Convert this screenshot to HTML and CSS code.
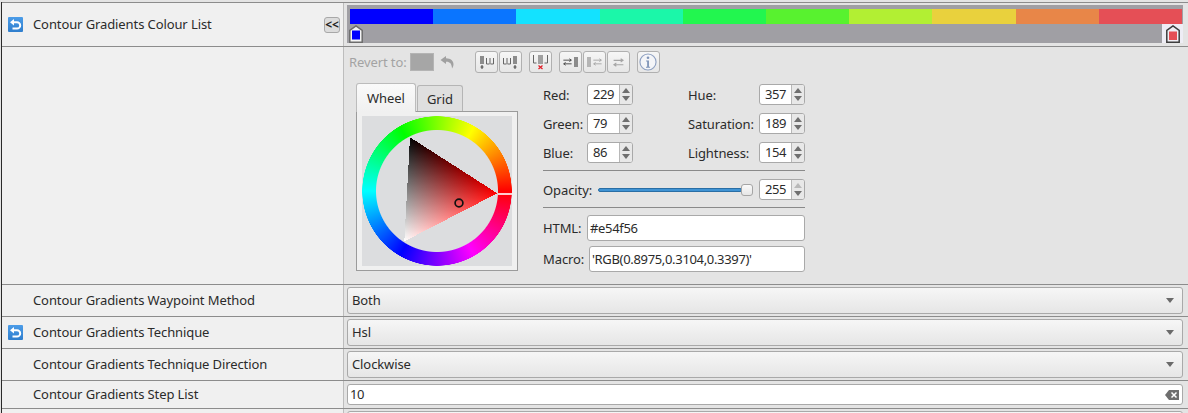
FILE: index.html
```html
<!DOCTYPE html>
<html lang="en">
<head>
<meta charset="utf-8">
<title>Contour Gradients</title>
<link rel="stylesheet" href="styles.css">
</head>
<body>
<svg class="defs" width="0" height="0" aria-hidden="true">
  <defs>
    <symbol id="reset" viewBox="0 0 15 15">
      <path d="M4 5.200H9a3.200 3.200 0 0 1 0 6.400H4.500" fill="none" stroke="#fff" stroke-width="2"/>
      <path d="M6 2v6.400L2 5.200z" fill="#fff"/>
    </symbol>
    <symbol id="arrows" viewBox="0 0 12 10">
      <path d="M1.500 3h8.500M8 1.500 10.200 3 8 4.500M10.500 7H2M4 5.500 1.800 7 4 8.500" fill="none" stroke="currentColor" stroke-width="1"/>
    </symbol>
  </defs>
</svg>
<main class="panel">
  <section class="row">
    <div class="label">
      <svg class="reset" width="15" height="15"><use href="#reset"/></svg>
      <span class="label-text">Contour Gradients Colour List</span>
      <button class="collapse">&lt;&lt;</button>
    </div>
    <div class="value value-bar">
      <div class="colour-list">
        <div class="stops">
          <i class="c0"></i><i class="c1"></i><i class="c2"></i><i class="c3"></i><i class="c4"></i><i class="c5"></i><i class="c6"></i><i class="c7"></i><i class="c8"></i><i class="c9"></i>
        </div>
        <div class="handles">
          <svg class="handle" width="14" height="18" viewBox="0 0 14 18"><path d="M.8 17.200V5.500L7 .9l6.200 4.600v11.700z" fill="#f4f4f4" stroke="#6c6c6c" stroke-width="1.500"/><rect x="3" y="5.500" width="8" height="9" fill="#0000ff"/></svg>
          <span class="handle-selected"><svg width="14" height="18" viewBox="0 0 14 18"><path d="M.8 17.200V5.500L7 .9l6.200 4.600v11.700z" fill="#f0eff5" stroke="#3d3d3d" stroke-width="1.500"/><rect x="3" y="6.500" width="8" height="8.500" fill="#e54f56"/></svg></span>
        </div>
      </div>
    </div>
  </section>

  <section class="row">
    <div class="label"></div>
    <div class="value value-editor">
      <div class="toolbar">
        <span class="revert-label">Revert to:</span>
        <span class="revert-swatch"></span>
        <svg class="undo" width="15" height="13" viewBox="0 0 15 13"><path d="M6 0 .5 4 6 8V5.800c3.500-.3 5.800 1.700 6 6.700 3.300-4.800 1-10-6-10.200z" fill="#a0a0a0"/></svg>
        <div class="tool-group">
          <button class="tool"><svg width="17" height="15" viewBox="0 0 17 15"><rect x="2" y="1" width="4" height="8" fill="#8c8c8c"/><path d="M4 10v4M2.500 12h3" stroke="#444"/><path d="M8.500 3v6h3M15.500 3v6h-3M12 3v6" fill="none" stroke="#666"/></svg></button>
          <button class="tool"><svg width="17" height="15" viewBox="0 0 17 15"><path d="M1.500 3v6h3M8.500 3v6h-3M5 3v6" fill="none" stroke="#666"/><rect x="11" y="1" width="4" height="8" fill="#8c8c8c"/><path d="M13 10v4M11.500 12h3" stroke="#444"/></svg></button>
        </div>
        <button class="tool tool-solo"><svg width="17" height="16" viewBox="0 0 17 16"><path d="M1.500 1v8h3M15.500 1v8h-3" fill="none" stroke="#666"/><rect x="6" y="1" width="5" height="9" fill="#a0a0a0"/><path d="M6.500 11.500l4 3.500M10.500 11.500l-4 3.500" stroke="#e0202a" stroke-width="1.300"/></svg></button>
        <div class="tool-group">
          <button class="tool"><svg width="17" height="12" viewBox="0 0 17 12"><svg x="0" y="1" width="11" height="10" class="dark"><use href="#arrows"/></svg><rect x="12" y="1" width="4" height="10" fill="#8c8c8c"/></svg></button>
          <button class="tool"><svg width="17" height="12" viewBox="0 0 17 12"><rect x="1" y="1" width="4" height="10" fill="#b5b5b5"/><svg x="6" y="1" width="11" height="10" class="faded"><use href="#arrows"/></svg></svg></button>
          <button class="tool"><svg width="13" height="11" viewBox="0 0 13 11" class="faded"><use href="#arrows"/></svg></button>
        </div>
        <button class="tool tool-info"><svg width="18" height="18" viewBox="0 0 19 19"><circle cx="9.500" cy="9.500" r="8.500" fill="#f4f5f8" stroke="#8fa1c2" stroke-width="1.200"/><circle cx="9.500" cy="5" r="1.400" fill="#7f94b8"/><path d="M7.500 8h3v6.500h1.200v1H7.400v-1h1.200V9H7.500z" fill="#7f94b8"/></svg></button>
      </div>

      <div class="picker">
        <div class="tabs">
          <div class="tab-bar">
            <span class="tab tab-active">Wheel</span>
            <span class="tab">Grid</span>
          </div>
          <div class="tab-pane">
            <div class="wheel">
              <svg width="150" height="150" viewBox="0 0 150 150">
                <defs>
                  <linearGradient id="hue" gradientUnits="userSpaceOnUse" x1="135.300" y1="77.300" x2="45.200" y2="72.360">
                    <stop offset="0" stop-color="#ff0000"/><stop offset="1" stop-color="#ff0000" stop-opacity="0"/>
                  </linearGradient>
                  <linearGradient id="lum" gradientUnits="userSpaceOnUse" x1="42.300" y1="125.300" x2="91.200" y2="49">
                    <stop offset="0" stop-color="#ffffff"/><stop offset="1" stop-color="#ffffff" stop-opacity="0"/>
                  </linearGradient>
                </defs>
                <g class="tri" shape-rendering="crispEdges">
                  <polygon points="48,21.300 135.300,77.300 42.300,125.300" fill="#000"/>
                  <polygon class="add" points="48,21.300 135.300,77.300 42.300,125.300" fill="url(#hue)"/>
                  <polygon class="add" points="48,21.300 135.300,77.300 42.300,125.300" fill="url(#lum)"/>
                </g>
                <path d="M136 78 150 78" stroke="#fff" stroke-width="1.600"/>
                <circle cx="97" cy="87" r="3.900" fill="none" stroke="#111" stroke-width="1.700"/>
              </svg>
            </div>
          </div>
        </div>

        <div class="form">
          <div class="spin-cols">
            <div class="spin-col col-rgb">
              <span>Red:</span><div class="spin"><span class="spin-val">229</span><span class="spin-btns"><i class="up"></i><i class="down"></i></span></div>
              <span>Green:</span><div class="spin"><span class="spin-val">79</span><span class="spin-btns"><i class="up"></i><i class="down"></i></span></div>
              <span>Blue:</span><div class="spin"><span class="spin-val">86</span><span class="spin-btns"><i class="up"></i><i class="down"></i></span></div>
            </div>
            <div class="spin-col col-hsl">
              <span>Hue:</span><div class="spin"><span class="spin-val">357</span><span class="spin-btns"><i class="up"></i><i class="down"></i></span></div>
              <span>Saturation:</span><div class="spin"><span class="spin-val">189</span><span class="spin-btns"><i class="up"></i><i class="down"></i></span></div>
              <span>Lightness:</span><div class="spin"><span class="spin-val">154</span><span class="spin-btns"><i class="up"></i><i class="down"></i></span></div>
            </div>
          </div>
          <hr class="rule">
          <div class="opacity">
            <span>Opacity:</span>
            <div class="slider"><span class="track"></span><span class="thumb"></span></div>
            <div class="spin"><span class="spin-val">255</span><span class="spin-btns"><i class="up off"></i><i class="down"></i></span></div>
          </div>
          <hr class="rule">
          <div class="field field-html"><span class="field-label">HTML:</span><span class="text-input">#e54f56</span></div>
          <div class="field field-macro"><span class="field-label">Macro:</span><span class="text-input">'RGB(0.8975,0.3104,0.3397)'</span></div>
        </div>
      </div>
    </div>
  </section>

  <section class="row">
    <div class="label"><span class="label-text">Contour Gradients Waypoint Method</span></div>
    <div class="value value-control"><div class="select"><span>Both</span><i class="caret"></i></div></div>
  </section>

  <section class="row">
    <div class="label">
      <svg class="reset" width="15" height="15"><use href="#reset"/></svg>
      <span class="label-text">Contour Gradients Technique</span>
    </div>
    <div class="value value-control"><div class="select"><span>Hsl</span><i class="caret"></i></div></div>
  </section>

  <section class="row">
    <div class="label"><span class="label-text">Contour Gradients Technique Direction</span></div>
    <div class="value value-control"><div class="select"><span>Clockwise</span><i class="caret"></i></div></div>
  </section>

  <section class="row">
    <div class="label"><span class="label-text">Contour Gradients Step List</span></div>
    <div class="value value-input">
      <div class="line-edit">
        <span>10</span>
        <svg width="14" height="10" viewBox="0 0 14 10"><path d="M4 0h10v10H4L0 5z" fill="#6e6e6e"/><path d="M6.500 2.500l5 5M11.500 2.500l-5 5" stroke="#fff" stroke-width="1.500"/></svg>
      </div>
    </div>
  </section>

  <section class="row">
    <div class="label"></div>
    <div class="value value-control"><div class="select"></div></div>
  </section>
</main>
</body>
</html>
```
FILE: styles.css
```css
* { box-sizing: border-box; }
html { height: 413px; overflow: hidden; }
body {
  margin: 0;
  height: 413px;
  overflow: hidden;
  background: #e4e4e4;
  color: #2b2b2b;
  font: 13px/18px "Noto Sans", "Open Sans", sans-serif;
  letter-spacing: -0.1px;
}
.defs { display: block; height: 0; }
.panel {
  height: 411px;
  overflow: hidden;
  margin: 2px 0 0 1px;
  border-left: 1px solid #2a2a2a;
}
.row {
  display: grid;
  grid-template-columns: 342px 1fr;
  border-top: 1px solid #8c8c8c;
}
.label {
  display: flex;
  align-items: center;
  padding-left: 31px;
  background: #f0f0f0;
  border-right: 1px solid #bdbdbd;
}
.reset {
  flex: none;
  margin-left: -25px;
  margin-right: 10px;
  border-radius: 1px;
  background: linear-gradient(#4b9ce8, #2f7ecd);
}
.label-text { flex: 1; margin-bottom: 2px; white-space: nowrap; }
.collapse {
  flex: none;
  width: 16px;
  height: 16px;
  margin-right: 3px;
  padding: 0;
  border: 1px solid #a8a8a8;
  border-radius: 3px;
  background: #dcdcdc;
  color: #222;
  font: bold 12px/12px "Noto Sans", sans-serif;
}
.value { min-width: 0; background: #e4e4e4; }
.value-bar { padding: 2px 5px 3px 3px; }
.colour-list {
  height: 38px;
  padding: 4px 0 0 3px;
  background: #a09fa4;
}
.stops { display: flex; height: 15px; margin-right: 1px; }
.stops i { flex: 1; }
.c0 { background: #0000ff; }
.c1 { background: #0a75ff; }
.c2 { background: #13e2ff; }
.c3 { background: #1bf7a9; }
.c4 { background: #22f64f; }
.c5 { background: #58f22f; }
.c6 { background: #b2ef33; }
.c7 { background: #e9d13d; }
.c8 { background: #e88648; }
.c9 { background: #e54f56; }
.handles {
  display: flex;
  justify-content: space-between;
  align-items: flex-end;
  height: 19px;
  margin-left: -1px;
}
.handle { display: block; }
.handle-selected {
  display: flex;
  justify-content: center;
  align-items: flex-end;
  width: 21px;
  height: 19px;
  background: #eeedf5;
}
.value-editor { padding: 4px 0 0 5px; height: 237px; }
.toolbar { display: flex; align-items: center; height: 22px; }
.revert-label { color: #a3a3a3; }
.revert-swatch {
  width: 24px;
  height: 18px;
  margin-left: 3px;
  background: #a6a6a6;
  border: 1px solid #b4b4b4;
}
.undo { margin: 0 20px 0 6px; }
.tool-group { display: flex; gap: 1px; }
.tool {
  display: flex;
  align-items: center;
  justify-content: center;
  width: 23px;
  height: 22px;
  padding: 0;
  border: 1px solid #b0b0b0;
  border-radius: 3px;
  background: linear-gradient(#f6f6f6, #e6e6e6);
}
.tool-group + .tool-solo { margin-left: 7px; margin-right: 7px; }
.tool-info { margin-left: 7px; }
.dark { color: #444; }
.faded { color: #a5a5a5; }
.picker { display: flex; align-items: flex-start; margin: 10px 0 0 7px; }
.tabs { width: 162px; flex: none; }
.tab-bar { display: flex; align-items: flex-end; height: 28px; }
.tab {
  height: 26px;
  margin-left: 1px;
  padding: 4px 9px 0;
  border: 1px solid #b5b5b5;
  border-bottom: 0;
  border-radius: 3px 3px 0 0;
  background: #dfdfdf;
}
.tab-active {
  position: relative;
  z-index: 1;
  height: 29px;
  width: 60px;
  margin: 0 0 -1px;
  padding: 5px 10px 0;
  border-color: #bcbcbc;
  background: linear-gradient(#fafafa, #f0f0f0);
}
.tab-pane {
  height: 160px;
  padding: 4px 5px;
  background: #f0f0f0;
  border: 1px solid #9b9b9b;
}
.wheel {
  width: 150px;
  height: 150px;
  background:
    radial-gradient(circle closest-side, #dcdddf 60.500px, transparent 61.500px, transparent 74.500px, #dcdddf 75px),
    conic-gradient(from 90deg, #f00, #f0f, #00f, #0ff, #0f0, #ff0, #f00);
}
.wheel svg { display: block; }
.tri { isolation: isolate; }
.add { mix-blend-mode: plus-lighter; }
.form { width: 262px; margin: 1px 0 0 25px; }
.spin-cols { display: flex; justify-content: space-between; }
.spin-col { display: grid; row-gap: 8px; align-items: center; }
.col-rgb { grid-template-columns: 44px 46px; }
.col-hsl { grid-template-columns: 71px 46px; }
.spin {
  display: flex;
  width: 46px;
  height: 21px;
  overflow: hidden;
  background: #fff;
  border: 1px solid #a9a9a9;
  border-radius: 3px;
}
.spin-val { flex: 1; padding-left: 5px; line-height: 19px; letter-spacing: -0.4px; }
.spin-btns {
  display: flex;
  flex-direction: column;
  align-items: center;
  justify-content: center;
  gap: 3px;
  width: 13px;
  background: #e8e8e8;
  border-left: 1px solid #b8b8b8;
}
.up, .down { width: 0; height: 0; border-left: 4px solid transparent; border-right: 4px solid transparent; }
.up { border-bottom: 5px solid #6f6f6f; }
.down { border-top: 5px solid #6f6f6f; }
.up.off { border-bottom-color: #b9b9b9; }
.rule { height: 1px; margin: 7px 0 0; border: 0; background: #8a8a8a; }
.opacity { display: flex; align-items: center; height: 21px; margin-top: 8px; }
.slider { display: flex; align-items: center; flex: 1; margin: 0 6px; }
.track {
  flex: 1;
  height: 4px;
  margin-right: -1px;
  background: #3f93d4;
  border: 1px solid #2a6ea5;
  border-radius: 2px;
}
.thumb {
  flex: none;
  width: 12px;
  height: 12px;
  background: linear-gradient(#fafafa, #e6e6e6);
  border: 1px solid #a5a5a5;
  border-radius: 3px;
}
.field { display: flex; align-items: center; height: 26px; }
.field-html { margin-top: 7px; }
.field-macro { margin-top: 5px; }
.field-label { flex: none; }
.field-html .field-label { width: 44px; }
.field-macro .field-label { width: 46px; }
.text-input {
  flex: 1;
  height: 26px;
  padding-left: 2px;
  background: #fff;
  border: 1px solid #a9a9a9;
  border-radius: 3px;
  line-height: 24px;
  letter-spacing: -0.33px;
  white-space: nowrap;
}
.value-control { padding: 2px 5px 2px 3px; }
.select {
  display: flex;
  align-items: center;
  justify-content: space-between;
  height: 27px;
  padding: 0 8px 0 4px;
  background: linear-gradient(#f6f6f6, #e6e6e6);
  border: 1px solid #a9a9a9;
  border-radius: 3px;
}
.select span { margin-bottom: 2px; }
.caret {
  width: 0;
  height: 0;
  border-left: 4px solid transparent;
  border-right: 4px solid transparent;
  border-top: 5px solid #6a6a6a;
}
.value-input { padding: 3px 5px 3px 3px; }
.line-edit {
  display: flex;
  align-items: center;
  justify-content: space-between;
  height: 21px;
  padding: 0 3px 0 2px;
  background: #fff;
  border: 1px solid #a9a9a9;
  border-radius: 3px;
  letter-spacing: -0.4px;
}
.line-edit span { margin-bottom: 2px; }
```
